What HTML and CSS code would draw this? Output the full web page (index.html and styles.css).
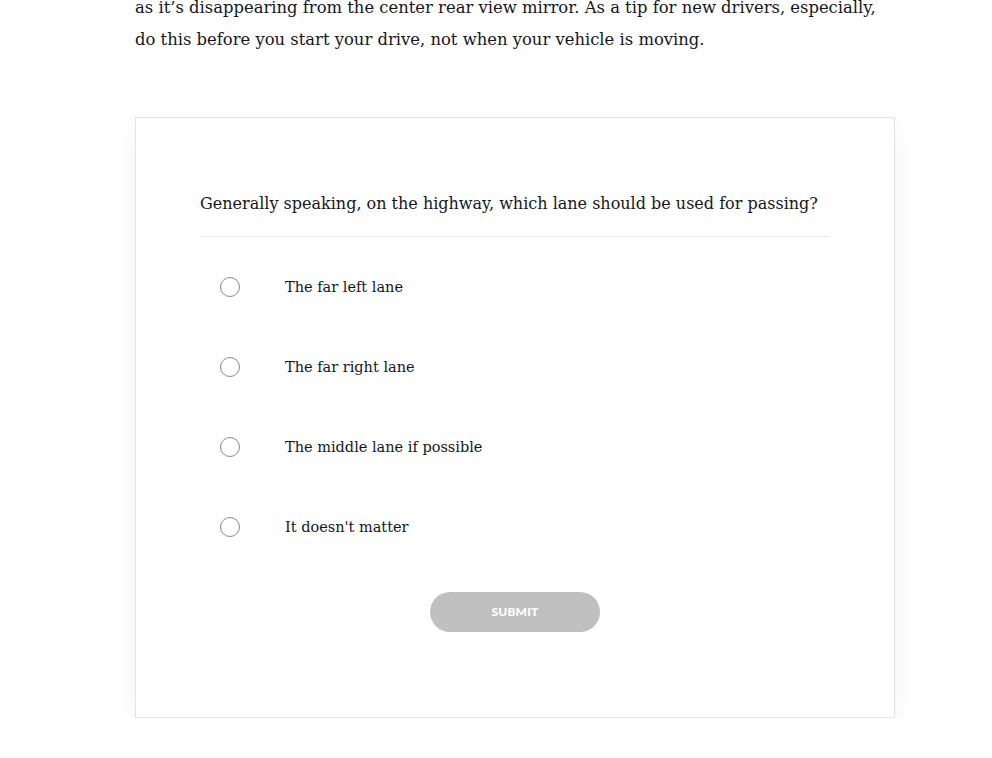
FILE: index.html
```html
<!DOCTYPE html>
<html lang="en">
<head>
<meta charset="utf-8">
<title>Quiz</title>
<link rel="stylesheet" href="styles.css">
</head>
<body>
<main class="content">
  <p class="lead">as it’s disappearing from the center rear view mirror. As a tip for new drivers, especially, do this before you start your drive, not when your vehicle is moving.</p>
  <section class="quiz">
    <h3 class="question">Generally speaking, on the highway, which lane should be used for passing?</h3>
    <div class="options">
      <label class="option"><span class="radio"></span><span class="label">The far left lane</span></label>
      <label class="option"><span class="radio"></span><span class="label">The far right lane</span></label>
      <label class="option"><span class="radio"></span><span class="label">The middle lane if possible</span></label>
      <label class="option"><span class="radio"></span><span class="label">It doesn't matter</span></label>
    </div>
    <div class="actions"><button class="submit" type="button">Submit</button></div>
  </section>
</main>
</body>
</html>
```

FILE: styles.css
```css
html, body {
  margin: 0;
  padding: 0;
  background: #fff;
}
body {
  font-family: "DejaVu Serif", "Liberation Serif", serif;
  color: #15161c;
}
.content {
  width: 760px;
  margin-left: 135px;
}
.lead {
  margin: -8px 0 61px;
  font-size: 16.4px;
  line-height: 32px;
}
.quiz {
  border: 1px solid #e3e3e3;
  box-shadow: 0 8px 24px rgba(0, 0, 0, 0.05);
  padding: 72px 64px 84px;
  box-sizing: border-box;
  height: 601px;
}
.question {
  margin: 0;
  font-size: 16px;
  font-weight: normal;
  line-height: 28px;
  padding-bottom: 18px;
  border-bottom: 1px solid #ebebeb;
}
.options {
  display: flex;
  flex-direction: column;
  gap: 40px;
  margin-top: 30px;
}
.option {
  display: flex;
  align-items: center;
  height: 40px;
  font-size: 14.5px;
}
.radio {
  width: 18px;
  height: 18px;
  border: 1px solid #8a8a8a;
  border-radius: 50%;
  margin-left: 20px;
  flex: none;
}
.label {
  margin-left: 45px;
}
.actions {
  display: flex;
  justify-content: center;
  margin-top: 45px;
}
.submit {
  width: 170px;
  height: 40px;
  border: none;
  border-radius: 20px;
  background: #c0c0c0;
  color: #fff;
  font-family: Lato, "Liberation Sans", sans-serif;
  font-weight: 900;
  font-size: 12px;
  line-height: 38px;
  text-transform: uppercase;
  letter-spacing: 0.2px;
}
```
